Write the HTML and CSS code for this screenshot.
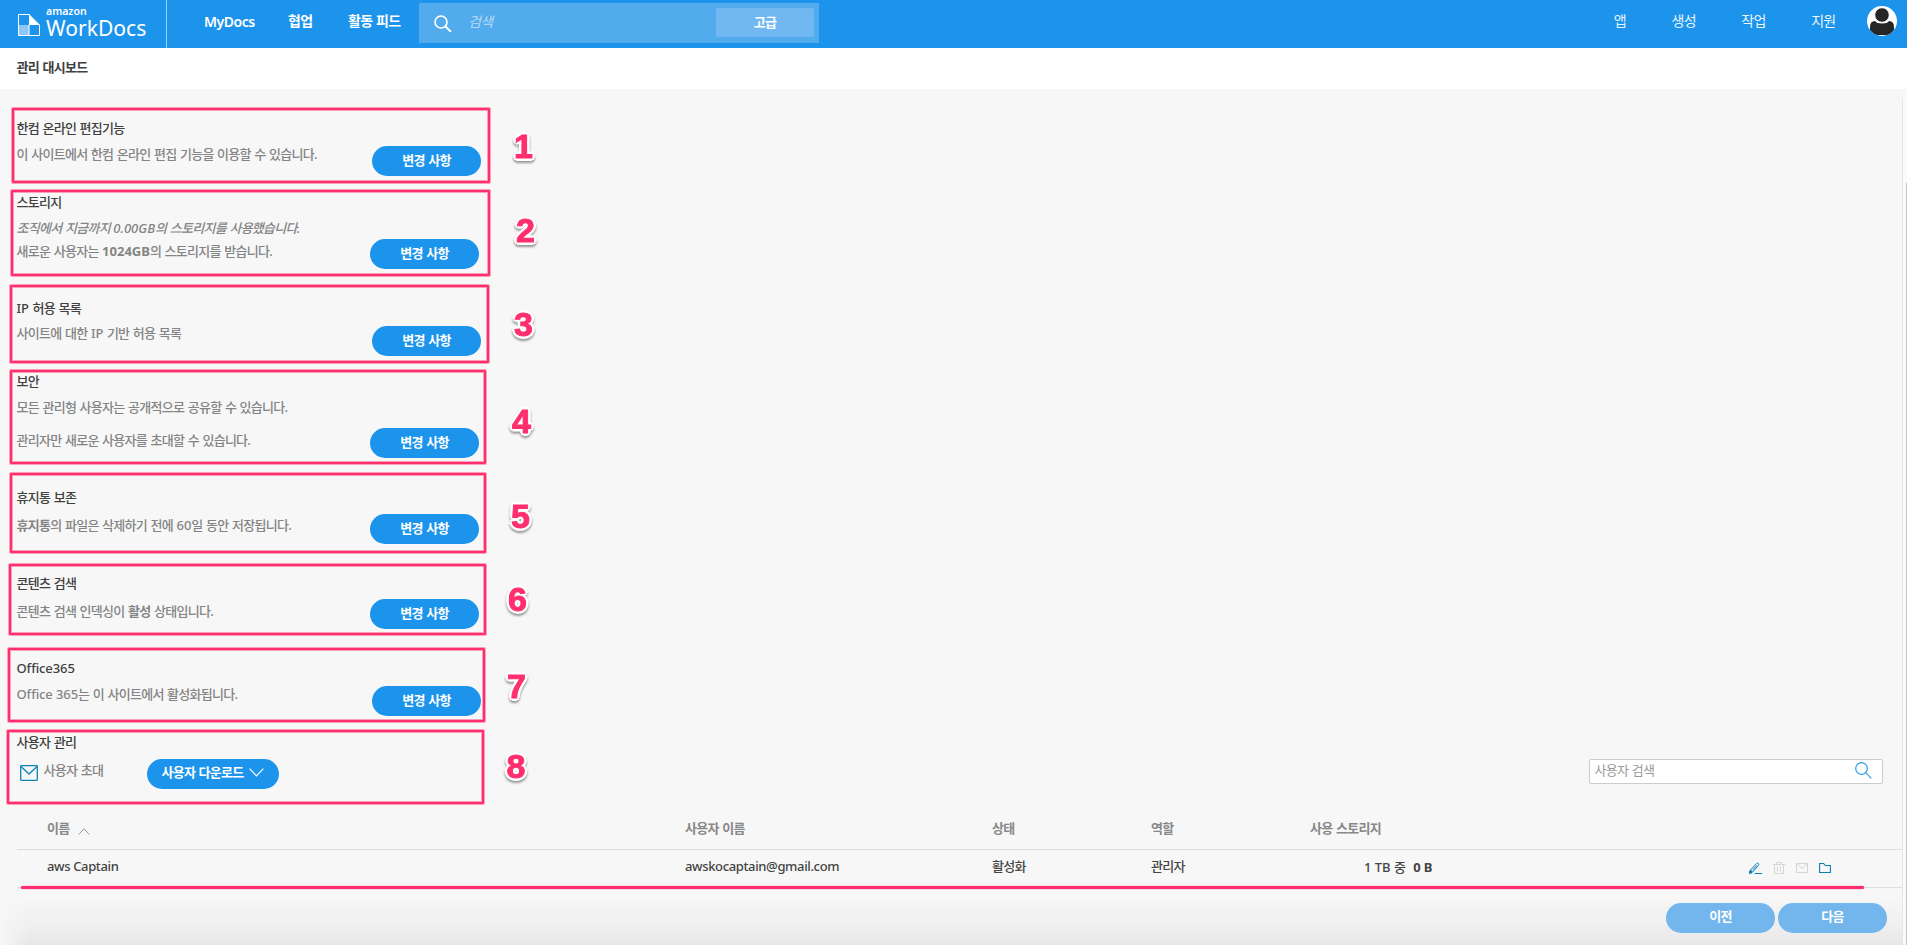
FILE: index.html
```html
<!DOCTYPE html>
<html lang="ko">
<head>
<meta charset="utf-8">
<title>Amazon WorkDocs</title>
<link rel="stylesheet" href="styles.css">
</head>
<body>
<header class="topbar">
  <div class="brand">
    <svg class="brand-icon" width="22" height="22" viewBox="0 0 22 22"><path d="M1 11h10v10H1z" fill="#8cc7f5"/><path d="M11 0v11h11z" fill="#fff"/><path d="M11.5.5H.5v21h21V11M11 11v10" fill="none" stroke="#fff"/></svg>
    <div class="brand-text"><span class="brand-small">amazon</span><span class="brand-name">WorkDocs</span></div>
  </div>
  <nav class="nav">
    <a class="lat nav-docs">MyDocs</a><a class="nav-collab">협업</a><a class="nav-feed">활동 피드</a>
  </nav>
  <div class="search">
    <svg width="18" height="18" viewBox="0 0 18 18" fill="none" stroke="#fff" stroke-width="1.7"><circle cx="7" cy="7" r="6"/><path d="M11.3 11.3l5.6 5.4" stroke-width="2"/></svg>
    <span class="search-hint">검색</span>
    <button class="advanced">고급</button>
  </div>
  <nav class="tools">
    <a>앱</a><a>생성</a><a>작업</a><a>지원</a>
    <svg class="avatar" width="30" height="30" viewBox="0 0 30 30"><defs><clipPath id="disc"><circle cx="15" cy="15" r="15"/></clipPath></defs><g clip-path="url(#disc)"><path d="M0 0h30v30H0z" fill="#fff"/><path d="M3 29V21q0-6 5-6 1.500 2.500 7 2.500t7-2.500q5 0 5 6v8z" fill="#262626"/><circle cx="15" cy="9" r="7.300" fill="#262626" stroke="#fff" stroke-width="1"/></g></svg>
  </nav>
</header>
<div class="titlebar">관리 대시보드</div>
<main class="page">
  <section class="card c1"><div class="text"><h2>한컴 온라인 편집기능</h2><p>이 사이트에서 한컴 온라인 편집 기능을 이용할 수 있습니다.</p></div><button class="pill">변경 사항</button><i class="mark"></i><b class="num">1</b></section>
  <section class="card c2"><div class="text"><h2>스토리지</h2><p class="slant">조직에서 지금까지 <span class="lat">0.00GB</span>의 스토리지를 사용했습니다.</p><p class="second">새로운 사용자는 <b class="lat">1024GB</b>의 스토리지를 받습니다.</p></div><button class="pill">변경 사항</button><i class="mark"></i><b class="num">2</b></section>
  <section class="card c3"><div class="text"><h2><span class="lat">IP</span> 허용 목록</h2><p>사이트에 대한 <span class="lat">IP</span> 기반 허용 목록</p></div><button class="pill">변경 사항</button><i class="mark"></i><b class="num">3</b></section>
  <section class="card c4"><div class="text"><h2>보안</h2><p>모든 관리형 사용자는 공개적으로 공유할 수 있습니다.</p><p class="second">관리자만 새로운 사용자를 초대할 수 있습니다.</p></div><button class="pill">변경 사항</button><i class="mark"></i><b class="num">4</b></section>
  <section class="card c5"><div class="text"><h2>휴지통 보존</h2><p><b>휴지통</b>의 파일은 삭제하기 전에 <span class="lat">60</span>일 동안 저장됩니다.</p></div><button class="pill">변경 사항</button><i class="mark"></i><b class="num">5</b></section>
  <section class="card c6"><div class="text"><h2>콘텐츠 검색</h2><p>콘텐츠 검색 인덱싱이 <b>활성</b> 상태입니다.</p></div><button class="pill">변경 사항</button><i class="mark"></i><b class="num">6</b></section>
  <section class="card c7"><div class="text"><h2 class="lat">Office365</h2><p><span class="lat">Office 365</span>는 이 사이트에서 활성화됩니다.</p></div><button class="pill">변경 사항</button><i class="mark"></i><b class="num">7</b></section>
  <div class="users-head">
    <section class="card c8"><div class="text"><h2>사용자 관리</h2>
      <div class="user-actions">
        <svg class="invite-icon" width="18" height="16" viewBox="0 0 18 16" fill="none" stroke="#0d84b8" stroke-width="1.300"><rect x=".7" y=".7" width="16.600" height="14.600" rx=".5"/><path d="M1 1.500l8 7.500 8-7.500"/></svg>
        <span class="invite">사용자 초대</span>
        <button class="pill download">사용자 다운로드<svg width="15" height="9" viewBox="0 0 15 9" fill="none" stroke="#fff" stroke-width="1.200"><path d="M.6.7l6.900 7.300L14.400.7"/></svg></button>
      </div></div><i class="mark"></i><b class="num">8</b></section>
    <div class="user-search"><span>사용자 검색</span><svg width="17" height="17" viewBox="0 0 17 17" fill="none" stroke="#2f9bea" stroke-width="1.200"><circle cx="6.500" cy="6.500" r="5.800"/><path d="M10.700 10.700l5.600 5.600"/></svg></div>
  </div>
  <div class="table">
    <div class="row head"><span>이름<svg class="sort" width="12" height="7" viewBox="0 0 12 7" fill="none" stroke="#999"><path d="M.7 6.500L6 .8l5.300 5.700"/></svg></span><span>사용자 이름</span><span>상태</span><span>역할</span><span>사용 스토리지</span></div>
    <div class="row body"><span class="tight">aws Captain</span><span class="tight">awskocaptain@gmail.com</span><span>활성화</span><span>관리자</span><span class="usage"><span class="lat">1 TB</span> 중<b class="lat">0 B</b></span>
      <span class="icons">
        <svg width="13" height="12" viewBox="0 0 13 12" fill="none" stroke="#0d7fb5" stroke-width="1"><path d="M1.500 8L7.500 1.600q1.100-.9 1.900-.1t.1 1.900L3.700 10M3.700 8l4.300-4.600M5.500 11.500H13"/><path d="M0 12V9.500L1.500 7.500 4 10l-1.500 1.500z" fill="#0d7fb5" stroke="none"/></svg>
        <svg width="12" height="12" viewBox="0 0 12 12" fill="none" stroke="#d5d5d5"><path d="M0 2.500h12M3.500 2.500V.5h5v2M1.500 2.500v9h9v-9M4.500 4.500v5M7.500 4.500v5"/></svg>
        <svg width="12" height="12" viewBox="0 0 12 12" fill="none" stroke="#d5d5d5"><path d="M.5 1.500h11v9H.5zM.7 1.700L6 6.500l5.300-4.800"/></svg>
        <svg width="12" height="12" viewBox="0 0 12 12" fill="none" stroke="#0d7fb5" stroke-width="1.100"><path d="M.6 10.500v-9h4l1.600 2h5.200v7z"/></svg>
      </span><i class="strike"></i></div>
  </div>
  <div class="pager"><button class="pill">이전</button><button class="pill">다음</button></div>
  <div class="scroll"><div class="thumb"></div></div>
</main>
</body>
</html>
```
FILE: styles.css
```css
* { box-sizing: border-box; }
body {
  margin: 0; width: 1907px; height: 945px; overflow: hidden; background: #f7f7f7; color: #444;
  font: 13px/20px "Noto Sans", "Noto Sans CJK KR", sans-serif;
  letter-spacing: -0.72px; word-spacing: 0.8px;
}
button { font: inherit; letter-spacing: inherit; word-spacing: inherit; border: 0; padding: 0; color: #fff; }
.lat { letter-spacing: 0; word-spacing: 0; }
.tight { letter-spacing: -0.36px; word-spacing: 0; }
svg { display: block; flex: none; }

.topbar { display: flex; height: 48px; background: #1c94ec; color: #fff; font-size: 14px; }
.brand { display: flex; width: 167px; padding-left: 18px; border-right: 1px solid #a4d4f7; letter-spacing: 0; }
.brand-icon { margin-top: 14px; }
.brand-text { display: flex; flex-direction: column; margin: 5px 0 0 6px; }
.brand-small { font-size: 10.500px; line-height: 12px; font-weight: 600; }
.brand-name { font-size: 21.100px; line-height: 22px; }
.nav { display: flex; width: 252px; padding: 11px 0 0 36px; font-weight: 600; white-space: nowrap; }
.nav-docs { width: 85px; letter-spacing: -0.45px; padding: 1px 0 0 1px; }
.nav-collab { width: 60px; }
.search { display: flex; width: 400px; height: 40px; margin-top: 3px; padding: 5px 5px 0 15px; background: #52abed; }
.search svg { margin-top: 7px; }
.search-hint { margin: 4px 0 0 16px; font-style: italic; color: #b5daf7; }
.advanced { width: 98px; height: 29px; margin-left: auto; padding-bottom: 2px; border-radius: 2px; background: #71b8f2; font-size: 13px; font-weight: 600; }
.tools { display: flex; margin-left: auto; padding: 11px 10px 0 0; color: #eaf5fd; gap: 45.500px; }
.avatar { margin: -5px 0 0 -14px; }
.titlebar { height: 41px; padding: 9px 16.500px; background: #fff; font-weight: 600; color: #404040; }

.page { position: relative; height: 856px; padding-top: 18px; }
.page::before { content: ""; position: absolute; left: 0; right: 0; bottom: 0; height: 48px; background: linear-gradient(#f7f7f700, #eeeeee 65%, #e7e7e7); -webkit-mask-image: linear-gradient(90deg, transparent, #000 28px); mask-image: linear-gradient(90deg, transparent, #000 28px); }
.card { position: relative; display: flex; justify-content: space-between; white-space: nowrap; }
.text { margin: -0.500px 0 0 -0.500px; }
.card h2 { margin: 0; font: inherit; font-weight: 500; color: #404040; }
.card p { margin: 6px 0 0; color: #848484; font-weight: 500; }
.card p.slant { font-style: italic; }
.pill { width: 109px; height: 30px; flex: none; padding-bottom: 3px; border-radius: 15px; background: #1c94ec; font-weight: 600; }
.mark { position: absolute; inset: 1px; border: 2px solid #ff2f6e; box-shadow: 0 0 0 1px #ff2f6e70, inset 0 0 0 1px #ff2f6e70; border-radius: 1px; }
.num {
  position: absolute; font: bold 34px/34px "Liberation Sans", Arial, sans-serif; letter-spacing: 0; color: #ff2f6e; margin-top: -0.500px;
  -webkit-text-stroke: 1px #ff2f6e;
  text-shadow: 3px 0 #fff, -3px 0 #fff, 0 3px #fff, 0 -3px #fff, 2px 2px #fff, -2px 2px #fff, 2px -2px #fff, -2px -2px #fff;
  filter: drop-shadow(0 2px 1px #0006);
}
.c1 { width: 480px; height: 77px; margin-left: 11px; padding: 11px 10px 0 6px; }
.c1 .pill { margin-top: 28px; }
.c1 .num { left: 503px; top: 22px; }
.c2 { width: 481px; height: 88px; margin: 5px 0 0 10px; padding: 3px 12px 0 7px; }
.c2 .pill { margin-top: 47px; }
.c2 .second { margin-top: 3px; }
.c2 .num { left: 506px; top: 24px; }
.c3 { width: 481px; height: 80px; margin: 7px 0 0 9px; padding: 14px 9px 0 8px; }
.c3 p { margin-top: 5px; }
.c3 .pill { margin-top: 28px; }
.c3 .num { left: 505px; top: 23px; }
.c4 { width: 478px; height: 96px; margin: 5px 0 0 9px; padding: 2px 8px 0 8px; }
.c4 .second { margin-top: 13px; }
.c4 .pill { margin-top: 57px; }
.c4 .num { left: 503px; top: 35px; }
.c5 { width: 478px; height: 82px; margin: 7px 0 0 9px; padding: 15px 8px 0 8px; }
.c5 p { margin-top: 8px; }
.c5 .pill { margin-top: 27px; }
.c5 .num { left: 502px; top: 27px; }
.c6 { width: 479px; height: 73px; margin: 9px 0 0 8px; padding: 10px 8px 0 9px; }
.c6 p { margin-top: 8px; }
.c6 .pill { margin-top: 26px; }
.c6 .num { left: 500px; top: 19px; }
.c7 { width: 479px; height: 76px; margin: 11px 0 0 7px; padding: 11px 5px 0 10px; }
.c7 h2, .c7 p .lat { letter-spacing: -0.1px; }
.c7 .pill { margin-top: 28px; }
.c7 .num { left: 500px; top: 22px; }
.users-head { display: flex; justify-content: space-between; margin-top: 6px; }
.c8 { width: 479px; height: 76px; margin-left: 6px; padding: 3px 0 0 11px; }
.c8 .num { left: 500.500px; top: 20px; }
.user-actions { display: flex; padding: 7px 0 0 3px; }
.invite-icon { margin-top: 6px; }
.invite { width: 103px; padding-left: 6px; color: #848484; font-weight: 500; margin-top: 1px; }
.download { display: flex; align-items: center; justify-content: center; width: 132px; gap: 5px; margin-left: 6px; }
.user-search { display: flex; justify-content: space-between; width: 294px; height: 25px; margin: 30px 24px 0 0; padding: 0 10px 0 4.500px; border: 1px solid #ccc; border-radius: 2px; background: #fff; color: #999; }
.user-search svg { margin-top: 2px; }

.table { width: 1885px; margin-left: 17px; }
.row { position: relative; display: grid; grid-template-columns: 638px 307px 159px 159px 1fr; padding-left: 30px; border-bottom: 1px solid #dedede; white-space: nowrap; }
.head { height: 45px; padding-top: 13px; color: #888; font-weight: 700; }
.head span { display: flex; }
.sort { margin: 10px 0 0 9px; }
.body { height: 38px; padding-top: 6px; grid-template-columns: 638px 307px 159px 159px 439px 1fr; font-weight: 500; }
.usage { padding: 1px 0 0 54px; }
.usage b { margin-left: 8px; letter-spacing: -0.2px; }
.icons { display: flex; gap: 11px; padding-top: 6px; }
.strike { position: absolute; left: 4px; top: 36px; width: 1843px; height: 3px; border-radius: 2px; background: #ff2f6e; box-shadow: 0 0 1px #ff2f6e; }
.pager { position: relative; display: flex; justify-content: flex-end; gap: 3px; padding: 15px 20px 0 0; }
.pager .pill { background: #72b6ed; padding-bottom: 5px; }
.scroll { position: absolute; right: 0; top: 9px; bottom: 0; width: 5px; border-left: 1px solid #e6e6e6; background: #fafafa; }
.thumb { width: 1px; margin: 85px 0 0 3px; height: 762px; background: #c4c4c4; }
```
